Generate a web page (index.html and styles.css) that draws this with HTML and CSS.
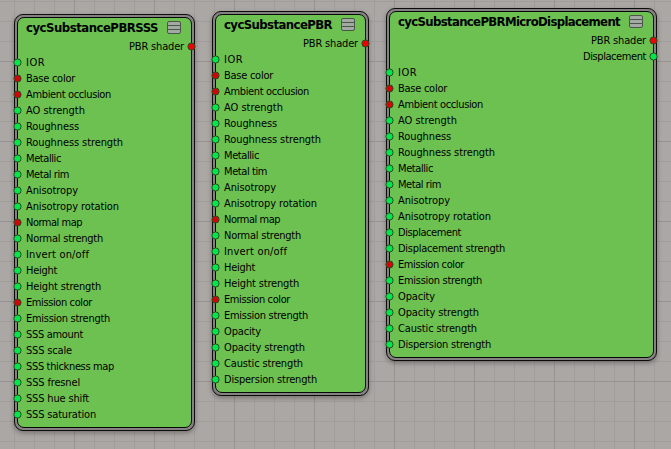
FILE: index.html
```
<!DOCTYPE html>
<html lang="en">
<head>
<meta charset="utf-8">
<title>Node graph</title>
<link rel="stylesheet" href="styles.css">
</head>
<body>
<main class="canvas" id="canvas"></main>
<script src="graph.js"></script>
</body>
</html>
```
FILE: styles.css
```
* { box-sizing: border-box; }
body { margin: 0; }
.canvas {
  position: relative;
  width: 671px;
  height: 449px;
  overflow: hidden;
  background-color: #aba7a4;
  background-image:
    linear-gradient(90deg, #969390 1px, transparent 1px),
    linear-gradient(#969390 1px, transparent 1px),
    linear-gradient(90deg, #a19d9a 1px, transparent 1px),
    linear-gradient(#a19d9a 1px, transparent 1px);
  background-size: 80px 80px, 80px 80px, 20px 20px, 20px 20px;
  background-position: 74px 0, 0 61px, 14px 0, 0 1px;
  font: 11px/16px "DejaVu Sans Condensed", "DejaVu Sans", sans-serif;
  font-stretch: condensed;
  color: #000;
}
.node {
  position: absolute;
  padding: 2px;
  border: 1px solid #0c0c0c;
  border-radius: 9px;
  background: #858081;
  box-shadow: 0 2px 5px rgba(0, 0, 0, .32);
}
.body {
  height: 100%;
  border: 1px solid #050805;
  border-radius: 7px;
  background: #6dc151;
}
.header {
  display: flex;
  align-items: flex-start;
  justify-content: space-between;
  height: 20px;
  padding: 2px 10px 0 8px;
}
.title { font-weight: bold; font-size: 13px; white-space: nowrap; }
.menu { display: block; flex: none; width: 14px; height: 13px; margin-top: 1px; }
.row { display: flex; align-items: center; height: 16px; white-space: nowrap; }
.in { margin-left: -5px; }
.out { justify-content: flex-end; margin-right: -5px; }
.label { align-self: flex-start; line-height: 18px; }
.port { flex: none; width: 9px; height: 9px; }
.in .port { margin-right: 4px; }
.out .port { margin-left: 3px; }
.green { fill: #00e848; }
.red { fill: #cf0505; }
.out .red { fill: #f00000; }
```
FILE: graph.js
```
const inputs = {
  sss: "IOR|*Base color|*Ambient occlusion|AO strength|Roughness|Roughness strength|Metallic|Metal rim|Anisotropy|Anisotropy rotation|*Normal map|Normal strength|Invert on/off|Height|Height strength|*Emission color|Emission strength|SSS amount|SSS scale|SSS thickness map|SSS fresnel|SSS hue shift|SSS saturation",
  pbr: "IOR|*Base color|*Ambient occlusion|AO strength|Roughness|Roughness strength|Metallic|Metal tim|Anisotropy|Anisotropy rotation|*Normal map|Normal strength|Invert on/off|Height|Height strength|*Emission color|Emission strength|Opacity|Opacity strength|Caustic strength|Dispersion strength",
  micro: "IOR|*Base color|*Ambient occlusion|AO strength|Roughness|Roughness strength|Metallic|Metal rim|Anisotropy|Anisotropy rotation|Displacement|Displacement strength|*Emission color|Emission strength|Opacity|Opacity strength|Caustic strength|Dispersion strength"
};
// Label widths in pixels.
const widths = {
  "IOR": 19, "Base color": 49, "Ambient occlusion": 85, "AO strength": 59,
  "Roughness": 53, "Roughness strength": 97, "Metallic": 35, "Metal rim": 43,
  "Metal tim": 43, "Anisotropy": 52, "Anisotropy rotation": 93, "Normal map": 56,
  "Normal strength": 77, "Invert on/off": 63, "Height": 31, "Height strength": 75,
  "Emission color": 66, "Emission strength": 84, "SSS amount": 57, "SSS scale": 46,
  "SSS thickness map": 88, "SSS fresnel": 54, "SSS hue shift": 63, "SSS saturation": 70,
  "Opacity": 37, "Opacity strength": 81, "Caustic strength": 79,
  "Dispersion strength": 93, "Displacement": 63, "Displacement strength": 107,
  "PBR shader": 55
};
// Labels starting with * are color ports.
const nodes = [
  { title: "cycSubstancePBRSSS", x: 14, y: 14, w: 181, h: 417, tw: 132, out: "*PBR shader", in: inputs.sss },
  { title: "cycSubstancePBR", x: 212, y: 11, w: 157, h: 385, tw: 108, out: "*PBR shader", in: inputs.pbr },
  { title: "cycSubstancePBRMicroDisplacement", x: 386, y: 8, w: 271, h: 353, tw: 222, out: "*PBR shader|Displacement", in: inputs.micro }
];
const port = red => `<svg class="port ${red ? "red" : "green"}" viewBox="0 0 9 9"><circle cx="4.5" cy="4.5" r="3.6" stroke="#2c4a28"/></svg>`;
const menu = `<svg class="menu" viewBox="0 0 14 13"><rect x=".5" y=".5" width="13" height="12" rx="1.5" fill="#a3aaa3" stroke="#4a5647"/><path d="M1 4.5h12M1 8.5h12" stroke="#4a5647"/></svg>`;
const row = (side, item) => {
  const red = item[0] === "*";
  const name = item.replace("*", "");
  const label = `<span class="label" data-width="${widths[name]}">${name}</span>`;
  return `<div class="row ${side}">${side === "in" ? port(red) + label : label + port(red)}</div>`;
};
document.getElementById("canvas").innerHTML = nodes.map(n =>
  `<section class="node" style="left:${n.x}px;top:${n.y}px;width:${n.w}px;height:${n.h}px"><div class="body">` +
  `<div class="header"><span class="title" data-width="${n.tw}">${n.title}</span>${menu}</div>` +
  n.out.split("|").map(i => row("out", i)).join("") +
  n.in.split("|").map(i => row("in", i)).join("") + `</div></section>`).join("");
// Spread each text over its allotted width.
document.querySelectorAll("[data-width]").forEach(t => {
  const extra = t.dataset.width - t.getBoundingClientRect().width;
  t.style.letterSpacing = extra / t.textContent.length + "px";
});
```
